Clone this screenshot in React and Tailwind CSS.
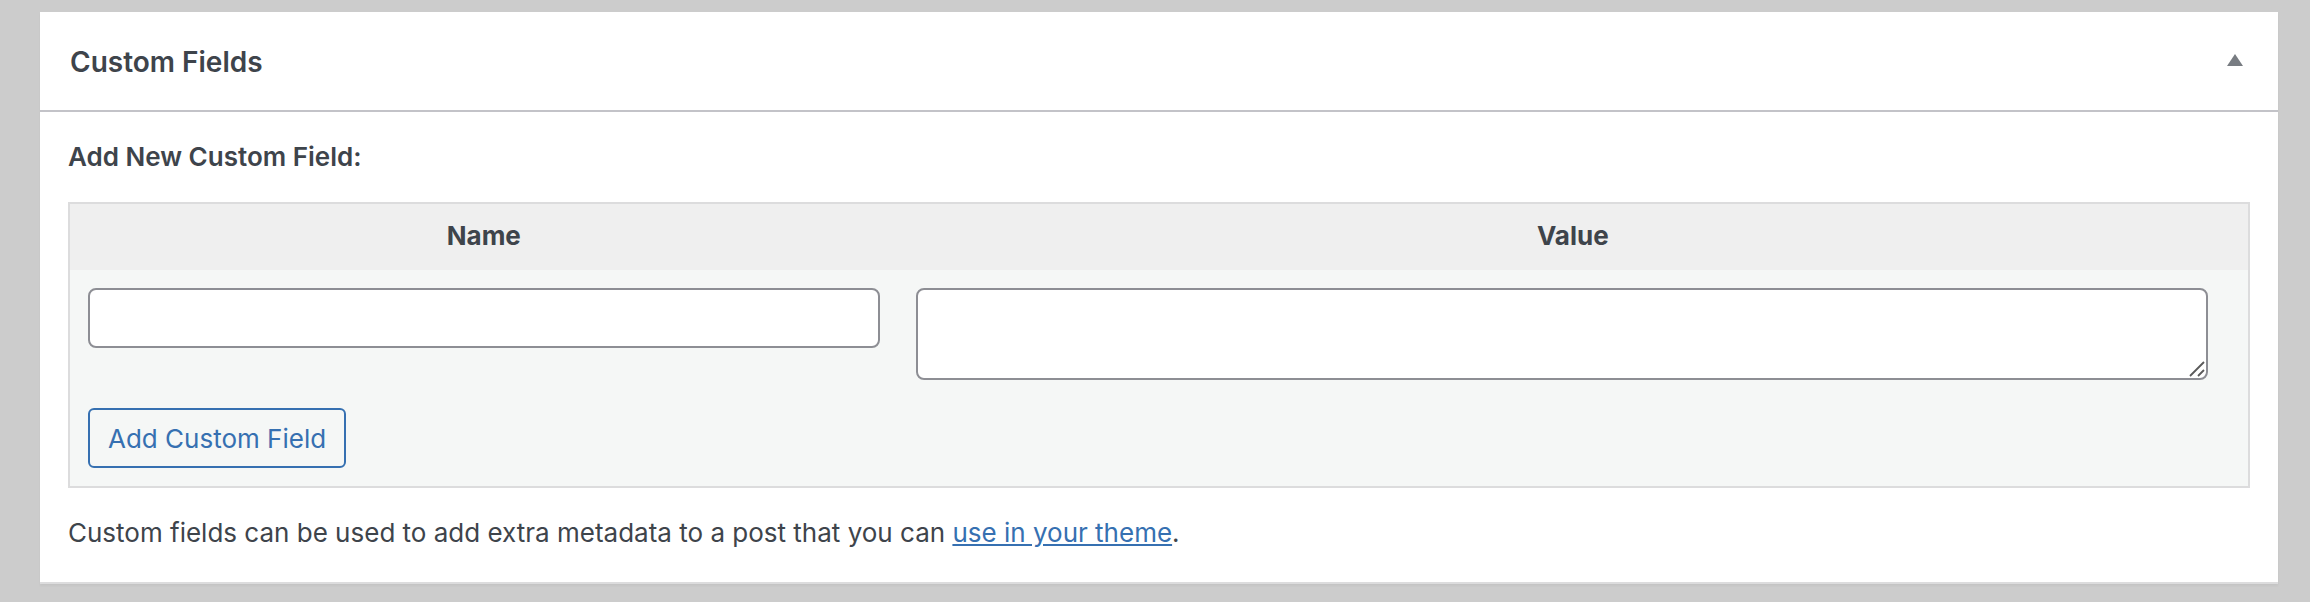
import React from "react";

function PanelHeader() {
  return (
    <header className="flex h-[100px] items-center justify-between border-b-2 border-[#c3c3c8] pt-[2px] pl-[30px] pr-[34px]">
      <h2 className="text-[28px] leading-[40px] font-semibold">Custom Fields</h2>
      <button type="button" aria-label="Toggle panel: Custom Fields" aria-expanded="true">
        <svg className="block h-[16px] w-[18px] fill-[#787c82]" viewBox="0 0 18 16" aria-hidden="true">
          <path d="M9 0 L17 12 H1 Z" />
        </svg>
      </button>
    </header>
  );
}

function FieldTable() {
  return (
    <table className="w-full table-fixed border-separate border-spacing-0 border-2 border-[#dcdcdd] bg-[#f5f7f6]">
      <thead>
        <tr className="h-[66px] bg-[#efefef]">
          <th className="w-[38%] p-0 pb-[2px] text-center font-bold">
            <label htmlFor="metakey">Name</label>
          </th>
          <th className="p-0 pb-[2px] text-center font-bold">
            <label htmlFor="metavalue">Value</label>
          </th>
        </tr>
      </thead>
      <tbody>
        <tr className="align-top">
          <td className="px-[18px] pt-[18px]">
            <input
              id="metakey"
              type="text"
              className="block h-[60px] w-full rounded-lg border-2 border-[#8d8e94] bg-white px-4"
            />
          </td>
          <td className="pt-[18px] pr-[40px] pl-[18px]">
            <div className="relative">
              <textarea
                id="metavalue"
                className="block h-[92px] w-full resize-none rounded-lg border-2 border-[#8d8e94] bg-white px-4 py-2"
              />
              <svg
                className="pointer-events-none absolute right-[3px] bottom-[3px] h-[16px] w-[16px] stroke-[#5a5a5a]"
                viewBox="0 0 16 16"
                fill="none"
                strokeWidth="1.8"
                aria-hidden="true"
              >
                <path d="M1 15 L15 1 M9 15 L15 9" />
              </svg>
            </div>
          </td>
        </tr>
        <tr>
          <td colSpan={2} className="px-[18px] pt-[28px] pb-[18px]">
            <button
              type="button"
              className="block h-[60px] rounded-md border-2 border-[#3670b1] bg-[#f5f7f6] px-[18px] pt-[2px] text-[#3670b1]"
            >
              Add Custom Field
            </button>
          </td>
        </tr>
      </tbody>
    </table>
  );
}

export default function App() {
  return (
    <main className="min-h-screen bg-[#cccccc] pt-3 pr-8 pb-[18px] pl-10 font-['Inter',sans-serif] text-[26px] leading-[40px] text-[#3e444b]">
      <section className="border-b-2 border-[#dcdcdd] bg-white shadow-[0_2px_2px_rgba(0,0,0,0.04)]">
        <PanelHeader />
        <div className="px-7 pt-[25px] pb-[29px]">
          <h3 className="mb-[25px] font-semibold">Add New Custom Field:</h3>
          <FieldTable />
          <p className="mt-[25px]">
            Custom fields can be used to add extra metadata to a post that you can{" "}
            <a href="#theme" className="text-[#3670b1] underline">
              use in your theme
            </a>
            .
          </p>
        </div>
      </section>
    </main>
  );
}
